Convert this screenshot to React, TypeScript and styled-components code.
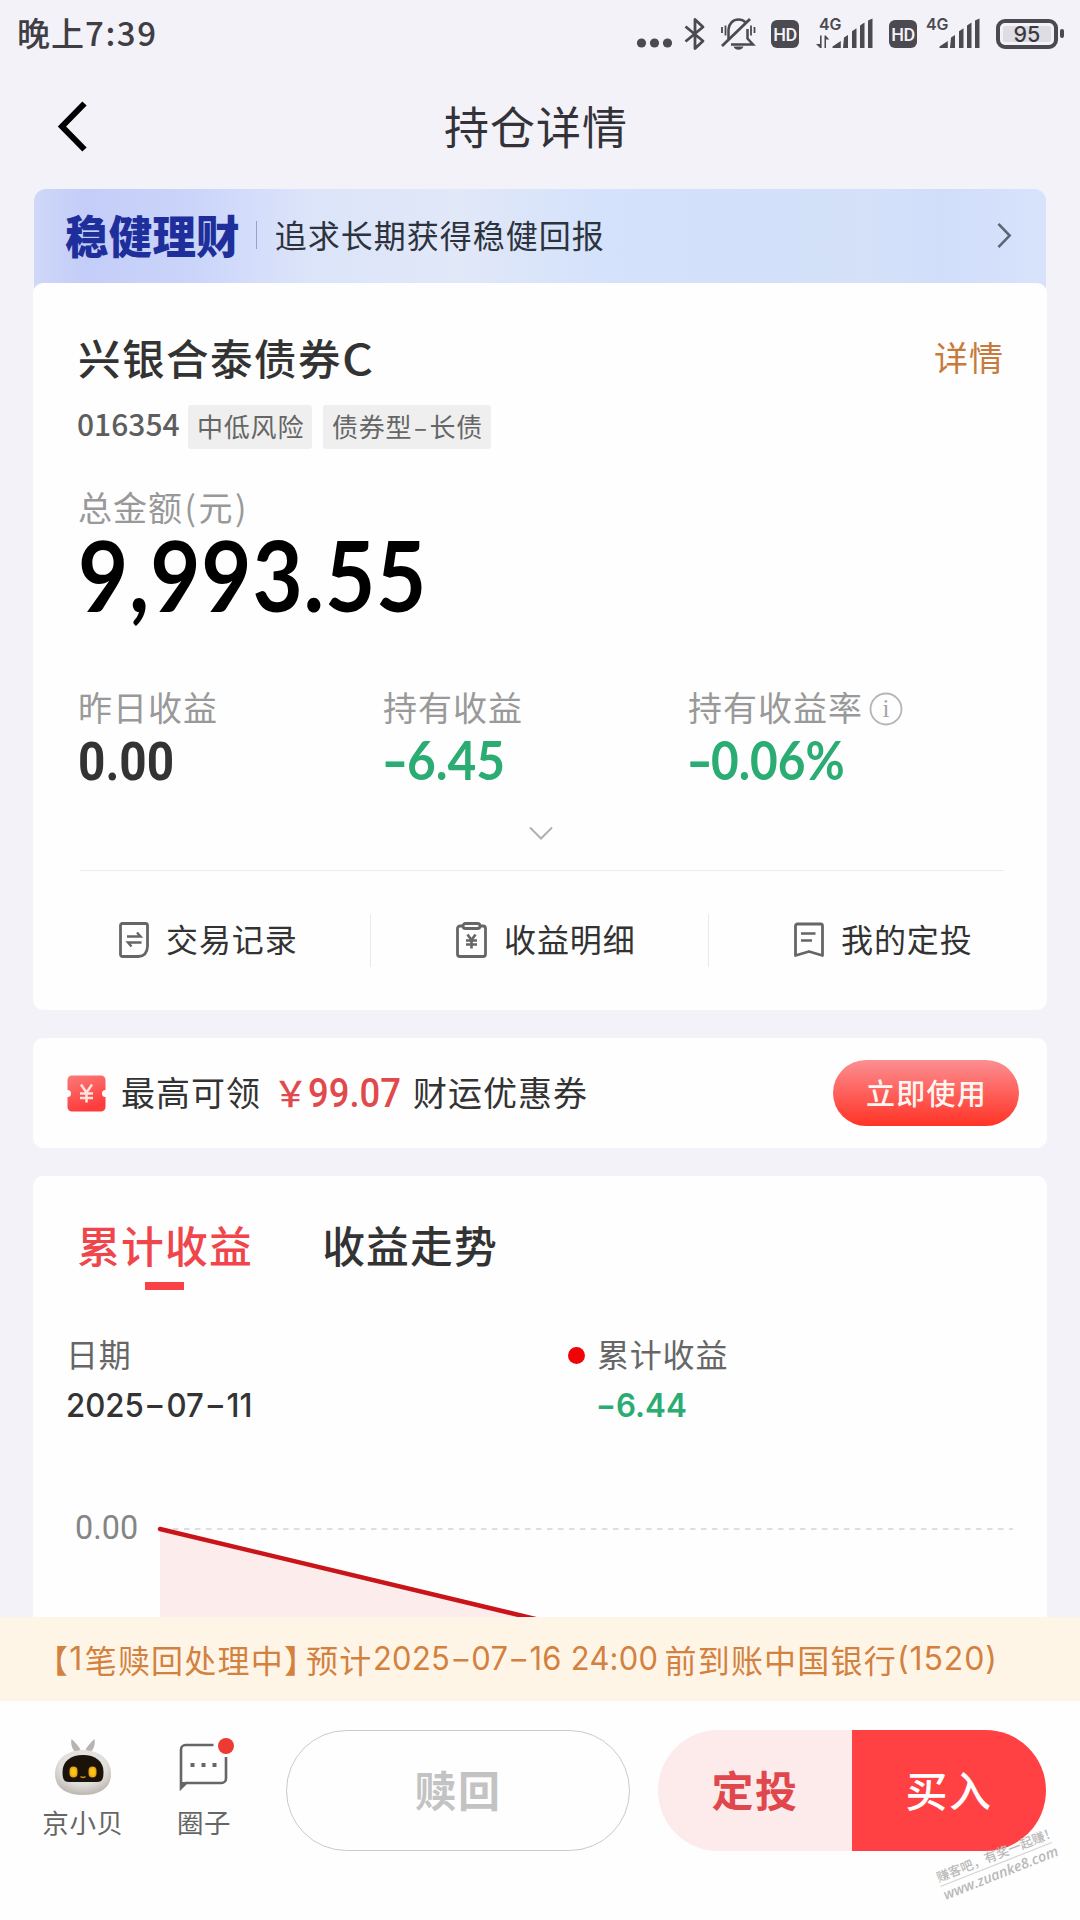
import React from "react";
import styled, { createGlobalStyle } from "styled-components";

const cjk = '"Noto Sans CJK SC", "Noto Sans", sans-serif';

const GlobalStyle = createGlobalStyle`
  * { box-sizing: border-box; }
  body { margin: 0; background: #f3f2f8; font-family: ${cjk}; }
  button { border: 0; background: none; padding: 0; font: inherit; color: inherit; }
  svg { display: block; flex: none; overflow: visible; }
`;

const Page = styled.div`
  width: 1080px;
  height: 1920px;
  display: flex;
  flex-direction: column;
  overflow: hidden;
  background: #f3f2f8;
`;

/* Digits: set in a Latin face, optionally condensed. */
const Num = styled.span<{ $w?: number; $scale?: number; $face?: string; $ls?: number }>`
  display: inline-block;
  font-family: ${(p) => p.$face ?? "Inter"}, "Noto Sans CJK SC", sans-serif;
  width: ${(p) => (p.$w ? `${p.$w}px` : "auto")};
  letter-spacing: ${(p) => p.$ls ?? 0}px;
  white-space: nowrap;
  ${(p) => (p.$scale ? `transform: scaleX(${p.$scale}); transform-origin: left center;` : "")}
`;

/* A hyphen drawn as wide as the minus sign of the digits. */
const Dash = styled.span<{ $w: number; $stretch: number }>`
  display: inline-block;
  width: ${(p) => p.$w}px;
  text-align: center;
  letter-spacing: 0;
  transform: scaleX(${(p) => p.$stretch});
`;

/* ---------- Status bar ---------- */
const StatusBar = styled.div`
  height: 68px;
  padding: 0 16px 0 17px;
  display: flex;
  align-items: center;
  justify-content: space-between;
  color: #3f3e44;
`;
const Clock = styled.div`
  display: flex;
  align-items: center;
  height: 64px;
  margin-top: -5px;
  font-size: 33px;
  font-weight: 500;
  letter-spacing: 1px;
`;
const StatusIcons = styled.div`
  display: flex;
  align-items: center;
  margin-top: -1px;
  color: #4b4a50;
`;
const Gap = styled.i<{ $w: number }>`
  width: ${(p) => p.$w}px;
`;
const HdBadge = styled.span`
  width: 28px;
  height: 28px;
  border-radius: 6px;
  background: #4b4a50;
  color: #f3f2f8;
  font: 500 18px/30px Roboto, sans-serif;
  text-align: center;
  letter-spacing: -0.5px;
`;
const Battery = styled.span`
  position: relative;
  width: 62px;
  height: 30px;
  border: 4px solid #4b4a50;
  border-radius: 9px;
  padding: 3px;
  display: flex;
  margin-right: 6px;
  &::after {
    content: "";
    position: absolute;
    right: -10px;
    top: 6px;
    width: 4px;
    height: 9px;
    border-radius: 2px;
    background: #4b4a50;
  }
`;
const BatteryLevel = styled.span`
  flex: 1;
  background: #dedde3;
  border-radius: 2px;
  color: #3a393f;
  font: 500 21.5px/17px Inter, sans-serif;
  text-align: center;
`;

/* ---------- Nav ---------- */
const NavBar = styled.header`
  height: 121px;
  padding: 0 55px;
  display: grid;
  grid-template-columns: 60px 1fr 60px;
  align-items: start;
`;
const BackButton = styled.button`
  height: 50px;
  margin-top: 33px;
`;
const PageTitle = styled.h1`
  margin: 26px 8px 0 0;
  text-align: center;
  font-size: 45px;
  font-weight: 400;
  line-height: 64px;
  letter-spacing: 1px;
  color: #333238;
`;

/* ---------- Banner ---------- */
const Content = styled.main`
  height: 1428px;
  padding: 0 33px;
  display: flex;
  flex-direction: column;
  overflow: hidden;
`;
const Banner = styled.div`
  flex: none;
  height: 106px;
  margin: 0 1px -12px;
  padding: 0 34px 12px 31px;
  display: flex;
  align-items: center;
  border-radius: 12px 12px 0 0;
  background: linear-gradient(90deg, #cfd8f7 0%, #c3cdf8 5%, #cbd5fa 16%, #dce4fa 27%, #e1e8f8 42%, #d4e2fb 56%, #d2e0fa 70%, #d4e1f8 82%, #d1defa 90%, #d8e3fb 100%);
`;
const BannerBrand = styled.strong`
  font-size: 43.5px;
  font-weight: 900;
  line-height: 60px;
  letter-spacing: 0.2px;
  color: #1e2f9c;
  margin-top: -3px;
  transform: scaleY(1.04);
`;
const BannerRule = styled.i`
  width: 1px;
  height: 28px;
  margin: -3px 18px 0 16px;
  background: #93a3cf;
`;
const BannerText = styled.span`
  flex: 1;
  font-size: 32px;
  letter-spacing: 1px;
  color: #2d333d;
  margin-top: -4px;
`;

/* ---------- Holding card ---------- */
const Card = styled.section<{ $h: number; $mt?: number }>`
  flex: none;
  height: ${(p) => p.$h}px;
  margin-top: ${(p) => p.$mt ?? 0}px;
  border-radius: 10px;
  background: #fefefe;
  position: relative;
`;
const Holding = styled.div`
  padding: 43px 43px 0 45px;
`;
const TitleRow = styled.div`
  display: flex;
  justify-content: space-between;
  align-items: center;
  height: 60px;
`;
const FundName = styled.h2`
  margin: 0;
  font-size: 42.5px;
  font-weight: 500;
  letter-spacing: 1.5px;
  color: #333;
`;
const DetailLink = styled.a`
  font-size: 34px;
  letter-spacing: 1px;
  color: #c67b3d;
`;
const CodeRow = styled.div`
  display: flex;
  align-items: center;
  height: 44px;
  margin-top: 19px;
  color: #5e5e5e;
`;
const FundCode = styled.span`
  width: 111px;
  height: 40px;
  margin-left: -1px;
  font-size: 30px;
  font-weight: 500;
  line-height: 33px;
`;
const Tag = styled.span<{ $w: number }>`
  width: ${(p) => p.$w}px;
  height: 44px;
  margin-right: 11px;
  border-radius: 3px;
  background: #efefef;
  color: #666;
  font-size: 26px;
  font-weight: 400;
  line-height: 41px;
  letter-spacing: 0.8px;
  padding-left: 9px;
  white-space: nowrap;
`;
const Label = styled.div`
  display: flex;
  align-items: center;
  height: 40px;
  font-size: 34px;
  letter-spacing: 1px;
  color: #999;
  white-space: nowrap;
`;
const InfoButton = styled.button`
  margin: 5px 0 0 6px;
`;
const TotalLabel = styled(Label)`
  margin-top: 37px;
`;
const Bracket = styled.span`
  margin: 0 1.5px;
`;
const Total = styled.div`
  height: 80px;
  margin-top: 3px;
  font-size: 98px;
  font-weight: 700;
  line-height: 80px;
  color: #000;
`;
const Stats = styled.div`
  display: grid;
  grid-template-columns: 305px 305px 1fr;
  margin-top: 77px;
`;
const StatValue = styled.div<{ $green?: boolean }>`
  height: 60px;
  margin-top: 1px;
  font-size: 54px;
  font-weight: 700;
  line-height: 60px;
  color: ${(p) => (p.$green ? "#2aac73" : "#333")};
`;
const ExpandRow = styled.div`
  display: flex;
  justify-content: center;
  margin-top: 39px;
  height: 15px;
`;
const Rule = styled.hr`
  margin: 29px 0 0 2px;
  height: 1px;
  border: 0;
  background: #ebebee;
`;
const Actions = styled.nav`
  display: grid;
  grid-template-columns: 337px 338px 1fr;
  height: 138px;
  align-items: center;
`;
const Action = styled.button`
  display: flex;
  align-items: center;
  height: 53px;
  padding-left: 86px;
  gap: 17px;
  font-size: 32px;
  letter-spacing: 0.9px;
  color: #333;
  & + & {
    padding-left: 85px;
    border-left: 1px solid #e9e9ec;
  }
`;
const ActionText = styled.span`
  margin-top: -4px;
  white-space: nowrap;
`;

/* ---------- Coupon ---------- */
const CouponRow = styled.div`
  height: 100%;
  padding: 0 28px 0 34px;
  display: flex;
  align-items: center;
  font-size: 34px;
  letter-spacing: 1px;
  color: #333;
`;
const CouponText = styled.span<{ $w: number; $ml?: number }>`
  width: ${(p) => p.$w}px;
  margin-left: ${(p) => p.$ml ?? 0}px;
  margin-top: -3px;
  white-space: nowrap;
`;
const CouponAmount = styled.span`
  display: flex;
  align-items: center;
  height: 50px;
  width: 140px;
  margin-top: 1px;
  color: #e2494c;
  font-weight: 500;
  font-size: 40px;
  letter-spacing: 0;
`;
const Yen = styled.span`
  width: 35px;
  margin-top: -4px;
  font-size: 35px;
`;
const UseButton = styled.button`
  width: 186px;
  height: 66px;
  margin-left: auto;
  border-radius: 33px;
  background: linear-gradient(180deg, #fb8f92 0%, #ff625d 48%, #ff3326 100%);
  color: #fff6f2;
  font-size: 29px;
  font-weight: 500;
  letter-spacing: 1.2px;
  line-height: 60px;
  padding: 0 0 3px 1px;
`;

/* ---------- Profit chart card ---------- */
const Tabs = styled.div`
  display: flex;
  gap: 73px;
  padding: 38px 0 0 46px;
`;
const Tab = styled.button<{ $active?: boolean }>`
  width: 172px;
  height: 76px;
  display: flex;
  flex-direction: column;
  align-items: center;
  justify-content: space-between;
  font-size: 42.8px;
  font-weight: 500;
  line-height: 60px;
  letter-spacing: 1.1px;
  white-space: nowrap;
  color: ${(p) => (p.$active ? "#f0454a" : "#333")};
  &::after {
    content: "";
    width: 39px;
    height: 8px;
    margin-right: 2px;
    background: ${(p) => (p.$active ? "#f94146" : "transparent")};
  }
`;
const Legend = styled.div`
  display: grid;
  grid-template-columns: 502px 1fr;
  padding: 42px 0 0 33px;
`;
const LegendItem = styled.div`
  display: grid;
  grid-template-rows: 42px 1fr;
`;
const LegendLabel = styled.div`
  display: flex;
  align-items: center;
  font-size: 32px;
  letter-spacing: 0.8px;
  color: #666;
`;
const Dot = styled.i`
  width: 17px;
  height: 17px;
  margin: 4px 12px 0 0;
  border-radius: 50%;
  background: #f00408;
`;
const LegendValue = styled.div<{ $green?: boolean }>`
  height: 40px;
  margin-top: 9px;
  padding-left: ${(p) => (p.$green ? 28 : 0)}px;
  font-size: 33px;
  font-weight: ${(p) => (p.$green ? 600 : 500)};
  line-height: 40px;
  color: ${(p) => (p.$green ? "#2aac73" : "#333")};
`;
const Chart = styled.div`
  display: flex;
  padding-left: 42px;
  margin-top: 84px;
`;
const AxisLabel = styled.span`
  width: 82px;
  height: 40px;
  margin-top: -2px;
  font-size: 33px;
  line-height: 40px;
  color: #858585;
`;

/* ---------- Notice + bottom bar ---------- */
const Notice = styled.div`
  flex: none;
  height: 84px;
  padding: 0 0 1px 36px;
  display: flex;
  align-items: center;
  background: #fff5e7;
  color: #d2813f;
  font-size: 32px;
  letter-spacing: 1.2px;
  white-space: pre;
`;
const NoticeEta = styled.span`
  margin-left: -11px;
`;
const BottomBar = styled.footer`
  position: relative;
  flex: 1;
  display: flex;
  align-items: flex-start;
  padding: 29px 34px 0 33px;
  background: #fefefe;
`;
const Shortcut = styled.button<{ $w: number; $ml?: number }>`
  width: ${(p) => p.$w}px;
  height: 121px;
  margin-left: ${(p) => p.$ml ?? 0}px;
  display: flex;
  flex-direction: column;
  align-items: center;
  font-size: 26.5px;
  line-height: 36px;
  letter-spacing: 0.6px;
  color: #666;
  padding-top: 8px;
  white-space: nowrap;
`;
const ShortcutText = styled.span`
  margin-top: 8px;
`;
const Redeem = styled.button`
  width: 344px;
  height: 121px;
  margin-left: 52px;
  border: 1px solid #cacaca;
  border-radius: 61px;
  color: #c3c3c3;
  font-size: 42px;
  font-weight: 700;
  letter-spacing: 1.5px;
  padding-bottom: 4px;
`;
const BuyGroup = styled.div`
  display: flex;
  width: 388px;
  height: 121px;
  margin-left: auto;
  border-radius: 61px;
  overflow: hidden;
`;
const BuyButton = styled.button<{ $primary?: boolean }>`
  flex: 1;
  background: ${(p) => (p.$primary ? "#ff4144" : "#fdeaea")};
  color: ${(p) => (p.$primary ? "#fff" : "#e0474c")};
  font-size: 42px;
  font-weight: ${(p) => (p.$primary ? 500 : 700)};
  letter-spacing: 1.5px;
  padding-bottom: 4px;
`;
const Watermark = styled.div`
  position: absolute;
  left: 936px;
  top: 145px;
  width: 120px;
  transform: rotate(-21.5deg);
  color: #b9b9b9;
  text-align: center;
  white-space: nowrap;
`;
const WatermarkTop = styled.div`
  font-size: 12.8px;
  font-weight: 500;
  line-height: 18px;
  border-bottom: 1px solid #d3d3d3;
`;
const WatermarkUrl = styled.div`
  font: italic 600 14.3px/17px "Open Sans", sans-serif;
`;

/* ---------- Icons ---------- */
const Bluetooth = () => (
  <svg width="22" height="34" viewBox="0 0 22 34" fill="none" stroke="currentColor" strokeWidth="2.8" strokeLinejoin="round">
    <path d="M2.500 9.500 20 24l-8 7.500V2.500l8 7.500L2.500 24.500" />
  </svg>
);
const BellOff = () => (
  <svg width="36" height="34" viewBox="0 0 36 34" fill="none" stroke="currentColor" strokeWidth="2.5">
    <path d="M8.500 22V12.500C9 6.500 13 2.500 18.500 2.500c3 0 5 .8 6.800 2.600M27.500 12v9.500l5.500 6H11" />
    <path d="M2 29 30 2" strokeWidth="2.800" />
    <path d="M2 10v6M5.500 8.500v10M31 8.500v10M34.500 10v6" strokeWidth="1.800" />
    <path d="M13.500 29.500h10c-1 2.400-2.800 3.300-5 3.300s-4-.9-5-3.300z" fill="currentColor" stroke="none" />
  </svg>
);
const Signal = ({ data }: { data?: boolean }) => (
  <svg width={data ? 57 : 54} height="34" viewBox={data ? "0 0 57 34" : "3 0 54 34"} fill="currentColor">
    <text x="3" y="12.500" fontFamily="Inter" fontSize="16" fontWeight="600" textLength="22.500" lengthAdjust="spacingAndGlyphs">4G</text>
    {data && <path d="M4 18.500h1.600V31H4L0 27h4zM8.500 31V18.500h1.200l3.600 4H10V31z" />}
    <path d="M16.500 31v-1.500l8.300-5.500v7zM28 20.500l4-2.500v13h-5zM36 14.200l4.500-3v19.800H36zM44 8.500l4.500-3V31H44zM52 3.500l4.500-2V31H52z" />
  </svg>
);
const RecordIcon = () => (
  <svg width="30" height="36" viewBox="0 0 30 36" fill="none" stroke="#666" strokeWidth="2.800">
    <path d="M3.500 1.500h23a2 2 0 0 1 2 2v21c-.3 6-3 9.700-9 10h-16a2 2 0 0 1-2-2v-29a2 2 0 0 1 2-2z" />
    <path d="M8 14.500h13.500l-3.500-4M22.500 20.500H9l3.500 4" strokeWidth="2.400" />
  </svg>
);
const ProfitIcon = () => (
  <svg width="31" height="36" viewBox="0 0 31 36" fill="none" stroke="#666" strokeWidth="2.800">
    <path d="M7 4H4a2.500 2.500 0 0 0-2.500 2.500V32A2.500 2.500 0 0 0 4 34.500h23a2.500 2.500 0 0 0 2.500-2.500V6.500A2.500 2.500 0 0 0 27 4h-3" />
    <rect x="7" y="1.500" width="17" height="5" rx="2.500" />
    <path d="m11.500 12.500 4 5.500 4-5.500M10 18.500h11M10 22.500h11M15.500 18v8.500" strokeWidth="2.600" />
  </svg>
);
const PlanIcon = () => (
  <svg width="30" height="36" viewBox="0 0 30 36" fill="none" stroke="#666" strokeWidth="2.800">
    <path d="M3.500 2h23a2 2 0 0 1 2 2v29.500L15 29.500 1.500 33.500V4a2 2 0 0 1 2-2z" strokeLinejoin="round" />
    <path d="M7 11.500h14.500M7 18.500h11" strokeWidth="2.400" />
  </svg>
);
const TicketIcon = () => (
  <svg width="39" height="37" viewBox="0 0 39 37">
    <defs>
      <linearGradient id="ticket" x1="0" y1="0" x2="0.300" y2="1">
        <stop offset="0" stopColor="#fb7a78" />
        <stop offset="1" stopColor="#fd3c3c" />
      </linearGradient>
    </defs>
    <path d="M5 .5h29a4.500 4.500 0 0 1 4.500 4.500v10a3.500 3.500 0 0 0 0 7v10a4.500 4.500 0 0 1-4.500 4.500H5A4.500 4.500 0 0 1 .5 32v-10a3.500 3.500 0 0 0 0-7V5A4.500 4.500 0 0 1 5 .5z" fill="url(#ticket)" />
    <path d="m14 9.500 5.500 8 5.500-8M13 18.500h13M13 23h13M19.500 17.500v10" fill="none" stroke="#ffe3dc" strokeWidth="2.500" />
  </svg>
);
const InfoIcon = () => (
  <svg width="34" height="34" viewBox="0 0 34 34">
    <circle cx="17" cy="17" r="15.500" fill="none" stroke="#b5b5b5" strokeWidth="1.800" />
    <text x="17" y="25" textAnchor="middle" fontFamily="Liberation Serif" fontSize="25" fill="#a5a5a5">i</text>
  </svg>
);
const Mascot = () => (
  <svg width="60" height="58" viewBox="0 0 60 58">
    <defs>
      <radialGradient id="shell" cx="0.500" cy="0.350" r="0.700">
        <stop offset="0" stopColor="#efedeb" />
        <stop offset="0.600" stopColor="#e0ddda" />
        <stop offset="1" stopColor="#b5aea8" />
      </radialGradient>
      <radialGradient id="eye" cx="0.500" cy="0.500" r="0.600">
        <stop offset="0.400" stopColor="#fcc61c" />
        <stop offset="1" stopColor="#e08a06" />
      </radialGradient>
    </defs>
    <path d="M18.500 1c-1 5 .5 10 4 13l6 0C26 8 22 4 18.500 1zM41.500 1c1 5-.5 10-4 13l-6 0C34 8 38 4 41.500 1z" fill="#b7b4b2" />
    <path d="M30 12c16 0 28 9.500 28 24 0 14-11 21-28 21S2 50 2 36C2 21.500 14 12 30 12z" fill="url(#shell)" />
    <path d="M30 17c12 0 20.500 6 20.500 17 0 8-2 10-6.500 10H16c-4.500 0-6.500-2-6.500-10C9.500 23 18 17 30 17z" fill="#1b1209" />
    <rect x="16.500" y="28.500" width="8" height="11" rx="4" fill="url(#eye)" />
    <rect x="35.500" y="28.500" width="8" height="11" rx="4" fill="url(#eye)" />
    <path d="M27.500 38.500q2.500 2 5 0" stroke="#c98b1a" strokeWidth="1.500" fill="none" />
  </svg>
);
const ChatIcon = () => (
  <svg width="52" height="58" viewBox="0 0 52 58" fill="none">
    <path d="M35.500 7H7.500A4.500 4.500 0 0 0 3 11.500V50l5-5h35.500a4.500 4.500 0 0 0 4.500-4.500V19" stroke="#666" strokeWidth="2.600" />
    <path d="M2 52V44h9z" fill="#666" />
    <path d="M12.500 25h4v4h-4zM23.500 25h4v4h-4zM34.500 25h4v4h-4z" fill="#666" />
    <circle cx="48" cy="8" r="8" fill="#ee3a34" />
  </svg>
);

export default function App() {
  return (
    <Page>
      <GlobalStyle />
      <StatusBar>
        <Clock>
          晚上<Num $face="Noto Sans CJK SC" $ls={1.6}>7:39</Num>
        </Clock>
        <StatusIcons>
          <svg width="36" height="34" viewBox="0 0 36 34" fill="currentColor">
            <circle cx="5.500" cy="26" r="4.600" />
            <circle cx="18.500" cy="26" r="4.600" />
            <circle cx="31.500" cy="26" r="4.600" />
          </svg>
          <Gap $w={11} />
          <Bluetooth />
          <Gap $w={15} />
          <BellOff />
          <Gap $w={15} />
          <HdBadge>HD</HdBadge>
          <Gap $w={17} />
          <Signal data />
          <Gap $w={16} />
          <HdBadge>HD</HdBadge>
          <Gap $w={9} />
          <Signal />
          <Gap $w={16} />
          <Battery>
            <BatteryLevel>95</BatteryLevel>
          </Battery>
        </StatusIcons>
      </StatusBar>

      <NavBar>
        <BackButton aria-label="返回">
          <svg width="32" height="50" viewBox="0 0 32 50" fill="none" stroke="#000" strokeWidth="6">
            <path d="M29.500 2.500 7 25.500l22.500 23" />
          </svg>
        </BackButton>
        <PageTitle>持仓详情</PageTitle>
      </NavBar>

      <Content>
        <Banner>
          <BannerBrand>稳健理财</BannerBrand>
          <BannerRule />
          <BannerText>追求长期获得稳健回报</BannerText>
          <svg width="15" height="27" viewBox="0 0 15 29" fill="none" stroke="#5c6575" strokeWidth="2.800">
            <path d="M1 1l12 12.500L1 26" />
          </svg>
        </Banner>

        <Card $h={727}>
          <Holding>
            <TitleRow>
              <FundName>兴银合泰债券<Num $face="Noto Sans CJK SC" $scale={1.13}>C</Num></FundName>
              <DetailLink>详情</DetailLink>
            </TitleRow>
            <CodeRow>
              <FundCode>016354</FundCode>
              <Tag $w={124}>中低风险</Tag>
              <Tag $w={168}>债券型<Dash $w={17} $stretch={1.6}>-</Dash>长债</Tag>
            </CodeRow>
            <TotalLabel>总金额<Bracket>(</Bracket>元<Bracket>)</Bracket></TotalLabel>
            <Total>
              <Num $face="Lato" $scale={0.885} $ls={0.9}>9,993.55</Num>
            </Total>
            <Stats>
              <div>
                <Label>昨日收益</Label>
                <StatValue><Num $face="Roboto" $scale={0.885}>0.00</Num></StatValue>
              </div>
              <div>
                <Label>持有收益</Label>
                <StatValue $green><Num $face="Lato" $scale={0.92}><Dash $w={26} $stretch={1.45}>-</Dash>6.45</Num></StatValue>
              </div>
              <div>
                <Label>持有收益率<InfoButton><InfoIcon /></InfoButton></Label>
                <StatValue $green><Num $face="Lato" $scale={0.885}><Dash $w={26} $stretch={1.5}>-</Dash>0.06%</Num></StatValue>
              </div>
            </Stats>
            <ExpandRow>
              <svg width="26" height="15" viewBox="0 0 26 15" fill="none" stroke="#b0b0b0" strokeWidth="2">
                <path d="M2 1.500 13 12.500l11-11" />
              </svg>
            </ExpandRow>
            <Rule />
          </Holding>
          <Actions>
            <Action><RecordIcon /><ActionText>交易记录</ActionText></Action>
            <Action><ProfitIcon /><ActionText>收益明细</ActionText></Action>
            <Action><PlanIcon /><ActionText>我的定投</ActionText></Action>
          </Actions>
        </Card>

        <Card $h={110} $mt={28}>
          <CouponRow>
            <TicketIcon />
            <CouponText $w={152} $ml={15}>最高可领</CouponText>
            <CouponAmount>
              <Yen>￥</Yen>
              <Num $face="Roboto" $scale={0.91}>99.07</Num>
            </CouponAmount>
            <CouponText $w={180}>财运优惠券</CouponText>
            <UseButton>立即使用</UseButton>
          </CouponRow>
        </Card>

        <Card $h={500} $mt={28}>
          <Tabs>
            <Tab $active>累计收益</Tab>
            <Tab>收益走势</Tab>
          </Tabs>
          <Legend>
            <LegendItem>
              <LegendLabel>日期</LegendLabel>
              <LegendValue>
                <Num $scale={0.945}>2025<Dash $w={24} $stretch={1.5}>-</Dash>07<Dash $w={24} $stretch={1.5}>-</Dash>11</Num>
              </LegendValue>
            </LegendItem>
            <LegendItem>
              <LegendLabel><Dot />累计收益</LegendLabel>
              <LegendValue $green>
                <Num $scale={0.95}><Dash $w={21} $stretch={1.4}>-</Dash>6.44</Num>
              </LegendValue>
            </LegendItem>
          </Legend>
          <Chart>
            <AxisLabel><Num $face="Roboto" $scale={0.98}>0.00</Num></AxisLabel>
            <svg width="860" height="130" viewBox="0 0 860 130" fill="none">
              <path d="M3 22V130H453.600z" fill="#fdecec" />
              <path d="M5 22H856" stroke="#dedede" strokeWidth="2" strokeDasharray="5.500 5.500" />
              <path d="M3 22 453.600 130" stroke="#c91519" strokeWidth="4.500" strokeLinecap="round" />
            </svg>
          </Chart>
        </Card>
      </Content>

      <Notice>
        <span>【</span>
        <Num $w={15.5}>1</Num>
        <span>笔赎回处理中】</span>
        <NoticeEta>预计</NoticeEta>
        <Num $scale={0.965} $w={292} $ls={0.3}>
          2025<Dash $w={22} $stretch={1.5}>-</Dash>07<Dash $w={22} $stretch={1.5}>-</Dash>16 24:00
        </Num>
        <span>前到账中国银行</span>
        <Num $ls={0.9}>(1520)</Num>
      </Notice>

      <BottomBar>
        <Shortcut $w={100}>
          <Mascot />
          <ShortcutText>京小贝</ShortcutText>
        </Shortcut>
        <Shortcut $w={60} $ml={41}>
          <ChatIcon />
          <ShortcutText>圈子</ShortcutText>
        </Shortcut>
        <Redeem>赎回</Redeem>
        <BuyGroup>
          <BuyButton>定投</BuyButton>
          <BuyButton $primary>买入</BuyButton>
        </BuyGroup>
        <Watermark>
          <WatermarkTop>赚客吧，有奖一起赚！</WatermarkTop>
          <WatermarkUrl>www.zuanke8.com</WatermarkUrl>
        </Watermark>
      </BottomBar>
    </Page>
  );
}
